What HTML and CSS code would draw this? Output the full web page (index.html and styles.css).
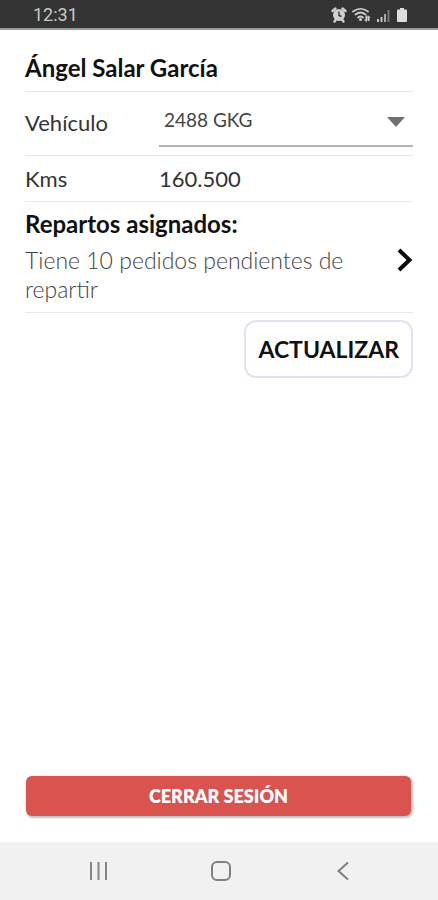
FILE: index.html
```html
<!DOCTYPE html>
<html lang="es">
<head>
<meta charset="utf-8">
<meta name="viewport" content="width=device-width, initial-scale=1">
<title>Repartos</title>
<link rel="stylesheet" href="styles.css">
</head>
<body>
<header class="status">
  <span class="clock">12:31</span>
  <div class="status-icons">
    <svg width="16" height="16" viewBox="0 0 16 16" aria-hidden="true">
      <path d="M1.500 4 4.500 1.500M14.500 4 11.500 1.500M3.500 14.500 5 12.500M12.500 14.500 11 12.500" stroke="#d2d2d2" stroke-width="2.400" stroke-linecap="round"/>
      <circle cx="8" cy="8" r="6" fill="#d2d2d2"/>
      <path d="M8 4.500V8.500L10.500 9.500" fill="none" stroke="#333" stroke-width="1.400"/>
    </svg>
    <svg width="19" height="16" viewBox="0 0 19 16" aria-hidden="true">
      <g fill="none" stroke="#cecece" stroke-width="1.700" stroke-linecap="round">
        <path d="M1 4.500Q8.500-1 16 4.500M3.500 7.500Q8.500 3.500 13.500 7.500M6 10.500Q8.500 8.500 11 10.500"/>
      </g>
      <circle cx="8.500" cy="12.500" r="1.500" fill="#cecece"/>
      <path d="M13.500 8.500v4h-1.500l2.200 2.500 1.300-1.500v-5zM16 14v-3h-1l1.800-2.500L18.500 11h-1v3z" fill="#cecece"/>
    </svg>
    <svg width="15" height="16" viewBox="0 0 15 16" aria-hidden="true">
      <path d="M1 12h2v3H1zM4.500 10h2v5h-2z" fill="#c4c4c4"/>
      <path d="M8 7h2v8H8z" fill="#aaa"/>
      <path d="M11.500 3h2v12h-2z" fill="#777"/>
    </svg>
    <svg width="12" height="16" viewBox="0 0 12 16" aria-hidden="true">
      <path d="M4 1h4v1.500h2q1 0 1 1V14q0 1-1 1H2q-1 0-1-1V3.500q0-1 1-1h2z" fill="#dedede"/>
    </svg>
  </div>
</header>

<main class="content">
  <h1 class="name">Ángel Salar García</h1>
  <div class="row vehicle">
    <label for="vehiculo">Vehículo</label>
    <div class="select-box">
      <select id="vehiculo"><option>2488 GKG</option></select>
      <svg class="caret" width="18" height="10" viewBox="0 0 18 10" aria-hidden="true"><path d="M0 0h18L9 10z" fill="#707070"/></svg>
    </div>
  </div>
  <div class="row kms">
    <span>Kms</span>
    <span>160.500</span>
  </div>
  <section class="deliveries">
    <h2>Repartos asignados:</h2>
    <a class="pending" href="#repartos">
      <span>Tiene 10 pedidos pendientes de repartir</span>
      <svg width="16" height="28" viewBox="0 0 16 28" aria-hidden="true"><path d="M2 4 12.500 14 2 24" fill="none" stroke="#0c0c0c" stroke-width="4"/></svg>
    </a>
  </section>
  <button class="update" type="button">ACTUALIZAR</button>
  <button class="logout" type="button">CERRAR SESIÓN</button>
</main>

<nav class="navbar" aria-label="Sistema">
  <button type="button" aria-label="Recientes">
    <svg width="22" height="22" viewBox="0 0 22 22"><path d="M3 2v18M10.500 2v18M18 2v18" stroke="#858585" stroke-width="2"/></svg>
  </button>
  <button type="button" aria-label="Inicio">
    <svg width="22" height="22" viewBox="0 0 22 22"><rect x="2" y="2" width="18" height="18" rx="5" fill="none" stroke="#808080" stroke-width="2"/></svg>
  </button>
  <button type="button" aria-label="Atrás">
    <svg width="22" height="22" viewBox="0 0 22 22"><path d="M16 2.500 6.500 11 16 19.500" fill="none" stroke="#808080" stroke-width="2"/></svg>
  </button>
</nav>
</body>
</html>
```
FILE: styles.css
```css
* {
  box-sizing: border-box;
}

body {
  margin: 0;
  min-height: 100vh;
  display: flex;
  flex-direction: column;
  background: #fff;
  color: #111;
  font-family: Lato, "Liberation Sans", sans-serif;
  font-size: 23px;
  font-weight: 300;
  line-height: 28px;
}

button,
select {
  font-family: inherit;
  cursor: pointer;
}

.status {
  display: flex;
  align-items: center;
  justify-content: space-between;
  height: 30px;
  padding: 2px 30px 0 33px;
  background: #333;
  border-bottom: 2px solid #999;
}

.clock {
  color: #c8c8c8;
  font-family: Roboto, sans-serif;
  font-size: 18px;
  font-weight: 400;
}

.status-icons {
  display: flex;
  gap: 5px;
}

.content {
  flex: 1;
  display: flex;
  flex-direction: column;
  padding: 24px 25px 26px;
}

.name {
  margin: 0;
  padding-bottom: 9px;
  border-bottom: 1px solid #e9e9e9;
  font-size: 24px;
  line-height: 28px;
}

.row {
  display: grid;
  grid-template-columns: 134px 1fr;
  align-items: center;
  font-size: 22px;
  font-weight: 400;
  color: #333;
}

.vehicle {
  height: 64px;
  padding-bottom: 2px;
  border-bottom: 1px solid #e9e9e9;
}

.select-box {
  position: relative;
}

.select-box select {
  display: block;
  width: 100%;
  height: 48px;
  padding: 0 32px 4px 5px;
  appearance: none;
  border: 0;
  border-bottom: 2px solid #b4b4b4;
  border-radius: 0;
  background: transparent;
  color: #444;
  font-size: 19px;
  font-weight: 400;
}

.caret {
  position: absolute;
  top: 18px;
  right: 8px;
  pointer-events: none;
}

.kms {
  height: 46px;
  border-bottom: 1px solid #e9e9f2;
}

.deliveries {
  padding: 8px 0;
  border-bottom: 1px solid #e9e9e9;
}

.deliveries h2 {
  margin: 0 0 8px;
  font-size: 24px;
  line-height: 28px;
}

.pending {
  display: flex;
  align-items: flex-start;
  justify-content: space-between;
  gap: 24px;
  color: #444;
  line-height: 29px;
  text-decoration: none;
}

.pending svg {
  flex: none;
}

.update {
  align-self: flex-end;
  margin-top: 7px;
  padding: 13px 12px;
  border: 2px solid #e2e2f0;
  border-radius: 12px;
  background: #fff;
  color: #111;
  font-size: 23px;
  font-weight: 700;
  line-height: 28px;
}

.logout {
  margin: auto 2px 0 1px;
  padding: 6px;
  border: 0;
  border-radius: 6px;
  background: #d9534f;
  box-shadow: 1px 1px 2px 1px #c4c0c0;
  color: #fff;
  font-size: 18px;
  font-weight: 800;
  line-height: 28px;
}

.navbar {
  display: flex;
  justify-content: space-around;
  align-items: center;
  height: 58px;
  padding: 0 34px 0 38px;
  background: #f1f1f1;
}

.navbar button {
  display: flex;
  padding: 8px;
  border: 0;
  background: none;
}
```
